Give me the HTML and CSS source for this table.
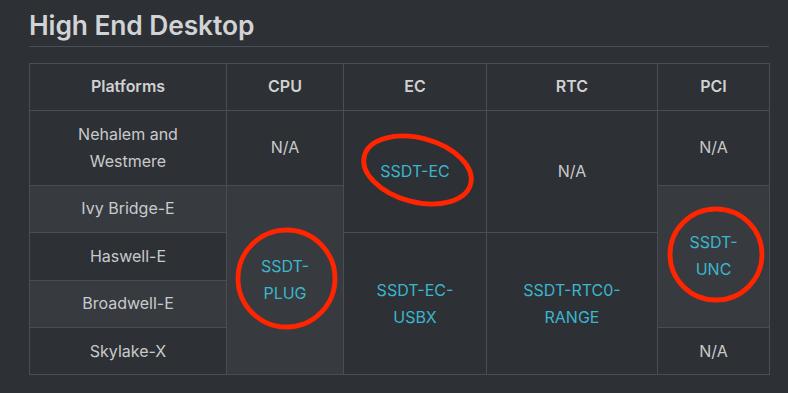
FILE: index.html
```html
<!DOCTYPE html>
<html>
<head>
<meta charset="utf-8">
<link rel="stylesheet" href="styles.css">
</head>
<body>
<div class="page">
  <h2 class="title">High End Desktop</h2>
  <table class="hw">
    <colgroup>
      <col class="c1"><col class="c2"><col class="c3"><col class="c4"><col class="c5">
    </colgroup>
    <thead>
      <tr><th>Platforms</th><th>CPU</th><th>EC</th><th>RTC</th><th>PCI</th></tr>
    </thead>
    <tbody>
      <tr>
        <td>Nehalem and<br>Westmere</td>
        <td>N/A</td>
        <td rowspan="2"><a>SSDT-EC</a></td>
        <td rowspan="2">N/A</td>
        <td>N/A</td>
      </tr>
      <tr>
        <td>Ivy Bridge-E</td>
        <td rowspan="4"><a>SSDT-<br>PLUG</a></td>
        <td rowspan="3"><a>SSDT-<br>UNC</a></td>
      </tr>
      <tr>
        <td>Haswell-E</td>
        <td rowspan="3"><a>SSDT-EC-<br>USBX</a></td>
        <td rowspan="3"><a>SSDT-RTC0-<br>RANGE</a></td>
      </tr>
      <tr>
        <td>Broadwell-E</td>
      </tr>
      <tr>
        <td>Skylake-X</td>
        <td>N/A</td>
      </tr>
    </tbody>
  </table>
</div>
<svg class="marks" width="788" height="393" viewBox="0 0 788 393">
  <ellipse cx="417.5" cy="170" rx="55" ry="32" transform="rotate(15 417.5 170)"/>
  <circle cx="286.5" cy="278.5" r="48.5"/>
  <ellipse cx="716" cy="254.5" rx="46" ry="45.5"/>
</svg>
</body>
</html>
```

FILE: styles.css
```css
html, body {
  margin: 0;
  padding: 0;
  background: #2d3034;
  width: 788px;
  height: 393px;
  overflow: hidden;
}
body {
  position: relative;
  font-family: Inter, "Noto Sans", sans-serif;
  color: #c9cacc;
  font-size: 16px;
}
.page {
  width: 740px;
  padding: 9px 0 0 29px;
}
.title {
  margin: 0;
  font-size: 26.4px;
  font-weight: 600;
  line-height: 32px;
  color: #d2d3d5;
  padding-bottom: 4.8px;
  border-bottom: 1px solid #4a4e57;
  letter-spacing: -0.1px;
}
.hw {
  margin-top: 16px;
  width: 740px;
  border-collapse: collapse;
  table-layout: fixed;
}
.c1 { width: 197px; }
.c2 { width: 117px; }
.c3 { width: 143px; }
.c4 { width: 171px; }
.c5 { width: 112px; }
.hw th, .hw td {
  border: 1px solid #4a4d56;
  padding: 9.6px 16px;
  line-height: 27.2px;
  text-align: center;
  vertical-align: middle;
}
.hw th {
  font-weight: 600;
  color: #d0d1d3;
}
.hw td {
  font-weight: 400;
}
.hw tbody tr:nth-child(2n) {
  background: #373a3f;
}
.hw a {
  color: #3bb6cc;
  text-decoration: none;
}
.marks {
  position: absolute;
  left: 0;
  top: 0;
  pointer-events: none;
}
.marks ellipse, .marks circle {
  fill: none;
  stroke: #ff2500;
  stroke-width: 4.8;
}
```
